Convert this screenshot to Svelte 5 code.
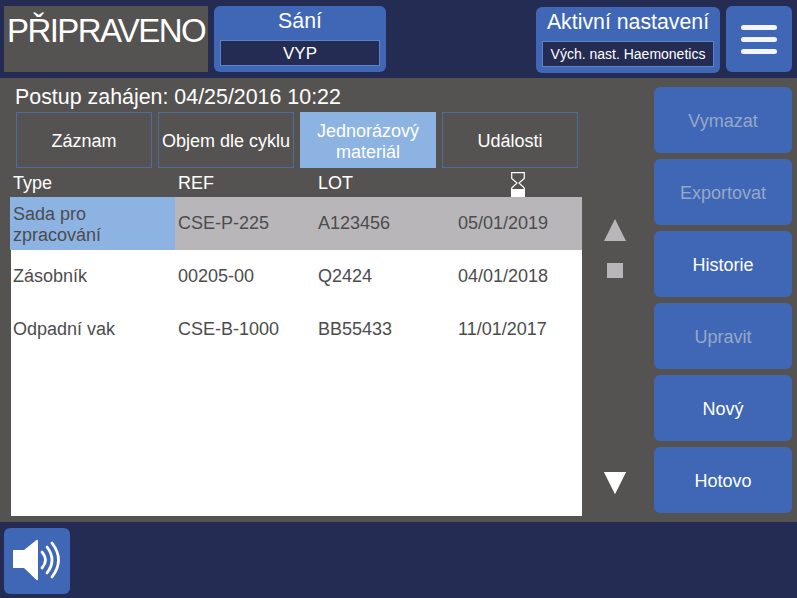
<script>
  const tabs = [
    { label: 'Záznam' },
    { label: 'Objem dle cyklu' },
    { label: 'Jednorázový materiál', active: true },
    { label: 'Události' }
  ];
  const rows = [
    { type: 'Sada pro zpracování', ref: 'CSE-P-225', lot: 'A123456', date: '05/01/2019', selected: true },
    { type: 'Zásobník', ref: '00205-00', lot: 'Q2424', date: '04/01/2018' },
    { type: 'Odpadní vak', ref: 'CSE-B-1000', lot: 'BB55433', date: '11/01/2017' }
  ];
  const actions = [
    { label: 'Vymazat', disabled: true },
    { label: 'Exportovat', disabled: true },
    { label: 'Historie' },
    { label: 'Upravit', disabled: true },
    { label: 'Nový' },
    { label: 'Hotovo' }
  ];
</script>

<div class="page">
  <header class="top">
    <div class="status">PŘIPRAVENO</div>
    <div class="panel suction">
      <div class="panel-title">Sání</div>
      <div class="panel-value">VYP</div>
    </div>
    <div class="panel settings">
      <div class="panel-title">Aktivní nastavení</div>
      <div class="panel-value small">Vých. nast. Haemonetics</div>
    </div>
    <button class="menu" aria-label="Menu">
      <span></span><span></span><span></span>
    </button>
  </header>

  <main class="main">
    <section class="content">
      <div class="started">Postup zahájen: 04/25/2016 10:22</div>
      <div class="tabs">
        {#each tabs as tab}
          <div class="tab" class:active={tab.active}><span>{tab.label}</span></div>
        {/each}
      </div>
      <div class="table-head">
        <div class="cell-type">Type</div>
        <div>REF</div>
        <div>LOT</div>
        <div class="hourglass">
          <svg width="14" height="25" viewBox="0 0 14 25">
            <path d="M.7.7h12.600v5.800L8 11l5.300 5v3H.7v-3L6 11 .7 6.500z" fill="none" stroke="#fff" stroke-width="1.200" />
            <rect x="0" y="17" width="14" height="8" fill="#fff" />
          </svg>
        </div>
      </div>
      <div class="table-wrap">
        <div class="table-body">
          {#each rows as row}
            <div class="row" class:selected={row.selected}>
              <div class="cell-type">{row.type}</div>
              <div>{row.ref}</div>
              <div>{row.lot}</div>
              <div>{row.date}</div>
            </div>
          {/each}
        </div>
        <div class="scroller">
          <svg class="arrow up" width="24" height="23" viewBox="0 0 24 23"><path d="M12 0 23.500 23H.5z" fill="#b8b6b8" /></svg>
          <div class="thumb"></div>
          <svg class="arrow down" width="24" height="23" viewBox="0 0 24 23"><path d="M.5 0h23L12 23z" fill="#fff" /></svg>
        </div>
      </div>
    </section>
    <aside class="actions">
      {#each actions as action}
        <button class="action" class:disabled={action.disabled}>{action.label}</button>
      {/each}
    </aside>
  </main>

  <footer class="bottom">
    <button class="sound" aria-label="Zvuk">
      <svg width="52" height="48" viewBox="0 0 52 48">
        <path d="M2 13H13L25.500 3q1.500-.8 1.500 1V42q0 1.800-1.500 1L13 31H2z" fill="#fff" />
        <path d="M31 15q7 8 0 16" fill="none" stroke="#fff" stroke-width="2.800" stroke-linecap="round" />
        <path d="M36 10q10 13 0 26" fill="none" stroke="#fff" stroke-width="2.800" stroke-linecap="round" />
        <path d="M41 6q13 17 0 34" fill="none" stroke="#fff" stroke-width="2.800" stroke-linecap="round" />
      </svg>
    </button>
  </footer>
</div>

<style>
  :global(body) {
    margin: 0;
    background: #252c54;
  }
  .page {
    width: 797px;
    height: 598px;
    display: flex;
    flex-direction: column;
    overflow: hidden;
    font-family: "Liberation Sans", Arial, sans-serif;
    color: #fff;
  }
  button {
    font: inherit;
    color: inherit;
    border: 0;
    padding: 0;
  }
  .top {
    height: 78px;
    box-sizing: border-box;
    padding: 6px 5px 6px 4px;
    display: flex;
    gap: 6px;
    background: #252c54;
  }
  .status {
    width: 204px;
    height: 66px;
    background: #555351;
    font-size: 33px;
    letter-spacing: -1.600px;
    line-height: 50px;
    text-align: center;
    white-space: nowrap;
  }
  .panel {
    height: 66px;
    box-sizing: border-box;
    border-radius: 6px;
    background: #3f67b5;
    padding: 0 6px 6px;
    display: flex;
    flex-direction: column;
    justify-content: flex-end;
    text-align: center;
  }
  .suction {
    width: 172px;
  }
  .settings {
    width: 184px;
    margin: 1px 0 0 auto;
  }
  .panel-title {
    flex: 1;
    font-size: 21.300px;
    line-height: 30px;
    white-space: nowrap;
  }
  .panel-value {
    height: 26px;
    box-sizing: border-box;
    border: 1px solid #5c83c4;
    background: #252c54;
    font-size: 17px;
    line-height: 25px;
    white-space: nowrap;
  }
  .panel-value.small {
    font-size: 14px;
  }
  .menu {
    width: 66px;
    height: 66px;
    border-radius: 6px;
    background: #3f67b5;
    display: flex;
    flex-direction: column;
    justify-content: center;
    align-items: center;
    gap: 7px;
  }
  .menu span {
    width: 36px;
    height: 5px;
    border-radius: 3px;
    background: #f2f6fc;
  }
  .main {
    height: 444px;
    background: #555351;
    display: flex;
    justify-content: space-between;
    padding-right: 5px;
  }
  .content {
    width: 654px;
    box-sizing: border-box;
    padding-top: 7px;
    display: flex;
    flex-direction: column;
  }
  .started {
    height: 27px;
    padding-left: 15px;
    font-size: 21.400px;
    line-height: 24px;
    white-space: nowrap;
  }
  .tabs {
    display: flex;
    gap: 6px;
    padding-left: 16px;
  }
  .tab {
    width: 136px;
    height: 56px;
    box-sizing: border-box;
    border: 1px solid #4d6c9f;
    padding-top: 2px;
    display: flex;
    align-items: center;
    justify-content: center;
    text-align: center;
    font-size: 18px;
    line-height: 21px;
  }
  .tab.active {
    background: #8db3e2;
    border-color: #8db3e2;
    padding-top: 4px;
  }
  .tab span {
    max-width: 134px;
  }
  .table-head,
  .row {
    display: grid;
    grid-template-columns: 165px 140px 140px 126px;
    font-size: 18px;
    align-items: center;
  }
  .table-head {
    height: 29px;
    margin-left: 10px;
    line-height: 31px;
  }
  .table-head > div {
    padding-left: 3px;
  }
  .table-head > .hourglass {
    display: flex;
    padding: 3px 0 0 56px;
    box-sizing: border-box;
    height: 29px;
    align-items: flex-start;
  }
  .table-wrap {
    display: flex;
  }
  .table-body {
    width: 571px;
    height: 319px;
    margin-left: 11px;
    background: #fff;
    color: #4c4c4e;
  }
  .row {
    height: 53px;
    margin-left: -1px;
    line-height: 21px;
  }
  .row > div {
    box-sizing: border-box;
    padding: 0 3px 1px;
    height: 53px;
    display: flex;
    align-items: center;
  }
  .row.selected {
    background: #b8b6b8;
  }
  .row.selected .cell-type {
    background: #8db3e2;
    padding: 2px 3px 0;
  }
  .scroller {
    width: 66px;
    height: 297px;
    padding-top: 22px;
    box-sizing: border-box;
    display: flex;
    flex-direction: column;
    align-items: center;
  }
  .thumb {
    width: 16px;
    height: 15px;
    margin-top: 22px;
    background: #b8b6b8;
  }
  .arrow.down {
    margin-top: 194px;
  }
  .actions {
    width: 138px;
    padding-top: 9px;
    display: flex;
    flex-direction: column;
    gap: 6px;
  }
  .action {
    height: 66px;
    box-sizing: border-box;
    padding-top: 2px;
    border-radius: 6px;
    background: #3f67b5;
    font-size: 18px;
  }
  .action.disabled {
    color: #98a7c8;
  }
  .bottom {
    flex: 1;
    background: #252c54;
    padding: 6px 0 0 4px;
  }
  .sound {
    width: 66px;
    height: 66px;
    border-radius: 6px;
    background: #3f67b5;
    display: flex;
    align-items: center;
    justify-content: center;
  }
</style>
